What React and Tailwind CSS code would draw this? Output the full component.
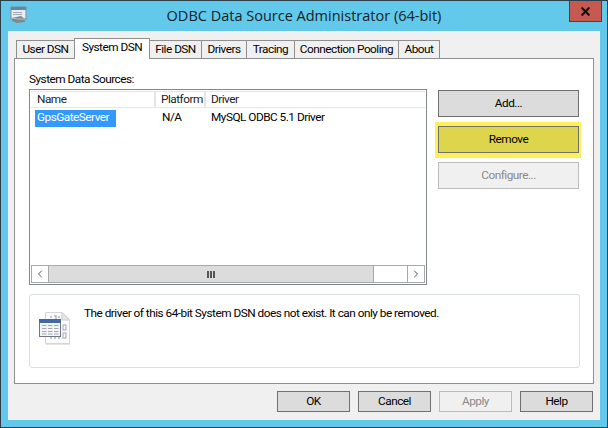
import React from 'react';
import { ChevronLeft, ChevronRight, X } from 'lucide-react';

const tabs = [
  { label: 'User DSN', w: 'w-[59px]' },
  { label: 'System DSN', w: 'w-[76px]', active: true },
  { label: 'File DSN', w: 'w-[53px]' },
  { label: 'Drivers', w: 'w-[46px]' },
  { label: 'Tracing', w: 'w-[49px]' },
  { label: 'Connection Pooling', w: 'w-[105px]' },
  { label: 'About', w: 'w-[42px]' },
];

const Tab = ({ label, w, active }) => {
  if (active) {
    return (
      <div className={`${w} relative z-10 -mb-px -ml-px h-[21px] bg-white border border-b-0 border-[#8f8f8f] flex items-center justify-center pb-[2px] text-black whitespace-nowrap`}>
        {label}
      </div>
    );
  }
  return (
    <div className={`${w} -ml-px first:ml-0 h-[18px] bg-[#f0f0f0] border border-b-0 border-[#8f8f8f] flex items-center justify-center pt-[1px] text-black whitespace-nowrap`}>
      {label}
    </div>
  );
};

const Button = ({ children, className = '' }) => (
  <div className={`flex items-center justify-center border border-[#707070] bg-[#dcdcdc] text-black ${className}`}>
    {children}
  </div>
);

const DisabledButton = ({ children, className = '' }) => (
  <div className={`flex items-center justify-center border border-[#bcbcbc] bg-[#f0f0f0] text-[#8a8a8a] ${className}`}>
    {children}
  </div>
);

const TitleIcon = () => (
  <svg width="18" height="18" viewBox="0 0 18 18">
    <rect x="1" y="1" width="15" height="12" fill="#e8eef2" stroke="#7f8f9c" />
    <rect x="1" y="1" width="15" height="3" fill="#5f86ad" />
    <rect x="3" y="6" width="9" height="1" fill="#a0a8b0" />
    <rect x="3" y="8" width="9" height="1" fill="#a0a8b0" />
    <path d="M2 12 L11 10 L15 13 L15 16 L7 17 L2 15 Z" fill="#7d8a90" />
    <path d="M2 12 L8 13 L15 13" stroke="#b5bec4" fill="none" />
  </svg>
);

const DsnIcon = () => (
  <svg width="32" height="34" viewBox="0 0 32 34">
    <path d="M6.5 1.5 H23 L30.5 9 V32.5 H6.5 Z" fill="#fbfbfb" stroke="#d4d6d9" />
    <path d="M23 1.5 V9 H30.5 Z" fill="#e3e6ea" stroke="#c9ccd0" />
    <rect x="7" y="33" width="24" height="1" fill="#e4e4e4" />
    <path d="M11 6 h2 M15 5 h2 v3 M19 6 h2" stroke="#b4b4be" strokeWidth="1.4" fill="none" />
    <path d="M11 27 h2 M15 27 h2 M19 27 h2" stroke="#b4b4be" strokeWidth="1.4" fill="none" />
    <rect x="24" y="14" width="3" height="5" fill="none" stroke="#b2b2c4" strokeWidth="1.2" />
    <rect x="24" y="22" width="3" height="5" fill="none" stroke="#b2b2c4" strokeWidth="1.2" />
    <rect x="0.5" y="8.5" width="21" height="17" fill="#f3f4f6" stroke="#6e7480" />
    <rect x="0" y="8" width="22" height="4" fill="#3f6aa3" />
    <path d="M3 14.5 h4.5 M9 14.5 h4.5 M15 14.5 h4.5 M3 17.5 h4.5 M9 17.5 h4.5 M15 17.5 h4.5 M3 20.5 h4.5 M9 20.5 h4.5 M15 20.5 h4.5 M3 23 h4.5 M9 23 h4.5 M15 23 h4.5" stroke="#a3a7ad" strokeWidth="1" fill="none" />
  </svg>
);

export default function App() {
  return (
    <div className="w-[608px] h-[428px] bg-[#62c9ea] border border-[#2c3e4a] flex flex-col text-[11.8px] tracking-[-0.5px] leading-none text-black overflow-hidden font-['Roboto',sans-serif]">
      {/* title bar */}
      <div className="h-[30px] grid grid-cols-[1fr_auto_1fr] shrink-0">
        <div className="pl-[9px] pt-[5px]"><TitleIcon /></div>
        <div className="font-['Open_Sans',sans-serif] tracking-normal text-[14.5px] text-[#15222c] pt-[8px] whitespace-nowrap">ODBC Data Source Administrator (64-bit)</div>
        <div className="flex justify-end pr-[5px]">
          <div className="w-[33px] h-[21px] bg-[#c75a50] border-x border-b border-[#5e3a36] flex items-center justify-center">
            <X size={13} strokeWidth={4} className="text-[#111]" />
          </div>
        </div>
      </div>

      {/* client area */}
      <div className="mx-[7px] w-[592px] h-[389px] bg-[#f0f0f0] pl-[6px] pt-[7px] flex flex-col">
        <div className="w-[579px] flex items-end pl-[2px] h-[20px] relative">
          {tabs.map((t) => <Tab key={t.label} {...t} />)}
        </div>

        <div className="w-[580px] h-[326px] bg-white border border-[#8f8f8f] pl-[14px] pt-[14px]">
          <div className="text-black h-[16px] pt-[1px]">System Data Sources:</div>

          <div className="flex">
            <div className="w-[398px] h-[196px] border border-[#828790] flex flex-col p-[1px]">
              <div className="h-[17px] flex items-center border-y border-[#e5e5e5] shrink-0 text-[#222]">
                <div className="w-[125px] pl-[6px] pt-[1px] border-r-2 border-[#e5e5e5] h-full flex items-center">Name</div>
                <div className="w-[50px] pl-[5px] pt-[1px] border-r-2 border-[#e5e5e5] h-full flex items-center">Platform</div>
                <div className="pl-[5px] pt-[1px]">Driver</div>
              </div>
              <div className="flex items-center h-[18px] mt-[1px]">
                <div className="w-[125px] pl-[4px]">
                  <div className="w-[81px] h-[17px] bg-[#3399ff] text-white flex items-center pl-[2px]">GpsGateServer</div>
                </div>
                <div className="w-[50px] pl-[6px]">N/A</div>
                <div className="pl-[5px]">MySQL ODBC 5.1 Driver</div>
              </div>
              <div className="flex-1" />
              <div className="h-[18px] border border-[#a9a9a9] flex shrink-0">
                <div className="w-[17px] bg-white flex items-center justify-center border-r border-[#a9a9a9]">
                  <ChevronLeft size={12} strokeWidth={1.8} className="text-[#444]" />
                </div>
                <div className="w-[325px] bg-[#dcdcdc] border-r border-[#a9a9a9] flex items-center justify-center">
                  <div className="flex gap-[1px]">
                    <span className="w-[2px] h-[7px] bg-[#555]" />
                    <span className="w-[2px] h-[7px] bg-[#555]" />
                    <span className="w-[2px] h-[7px] bg-[#555]" />
                  </div>
                </div>
                <div className="flex-1 bg-white" />
                <div className="w-[17px] bg-white flex items-center justify-center border-l border-[#a9a9a9]">
                  <ChevronRight size={12} strokeWidth={1.8} className="text-[#444]" />
                </div>
              </div>
            </div>

            <div className="ml-[11px] w-[141px] flex flex-col mt-[1px]">
              <Button className="h-[27px] pt-[1px]">Add...</Button>
              <div className="mt-[5px] -ml-[3px] w-[146px] bg-[#fff155] pl-[3px] pr-[2px] pt-[4px] pb-[5px]">
                <Button className="h-[27px] pt-[1px] bg-[#dfd54c] border-[#77723c]">Remove</Button>
              </div>
              <DisabledButton className="h-[27px] pt-[1px] mt-[4px]">Configure...</DisabledButton>
            </div>
          </div>

          <div className="mt-[9px] w-[551px] h-[74px] border border-[#d9dfe3] rounded-[3px] flex pl-[9px] pt-[16px]">
            <DsnIcon />
            <div className="ml-[13px] -mt-[3px] whitespace-nowrap">The driver of this 64-bit System DSN does not exist. It can only be removed.</div>
          </div>
        </div>

        <div className="flex justify-end gap-[8px] w-[579px] pt-[7px]">
          <Button className="w-[73px] h-[21px] border-[#3c7fb1] bg-[#dcdcdc]">OK</Button>
          <Button className="w-[73px] h-[21px]">Cancel</Button>
          <DisabledButton className="w-[73px] h-[21px]">Apply</DisabledButton>
          <Button className="w-[73px] h-[21px]">Help</Button>
        </div>
      </div>
    </div>
  );
}
